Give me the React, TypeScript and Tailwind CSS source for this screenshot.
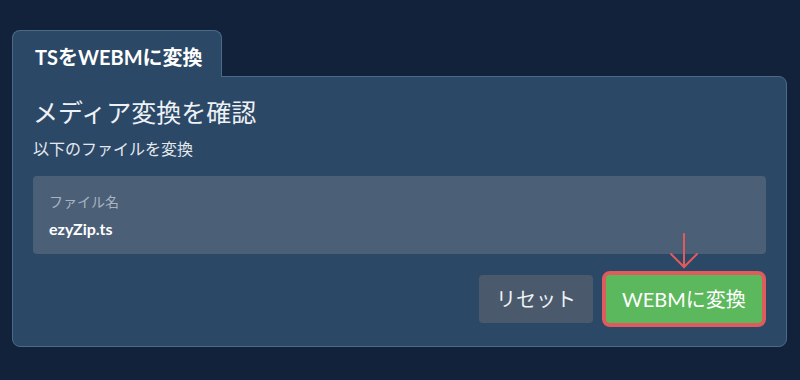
import React from 'react';

const font = { fontFamily: 'Lato, "Noto Sans CJK JP", sans-serif' };

const DownArrow = () => (
  <svg
    className="absolute left-1/2 -translate-x-1/2 -top-[42px]"
    width="30"
    height="36"
    viewBox="0 0 30 36"
    fill="none"
    stroke="#e05c5c"
    strokeWidth="2"
    strokeLinecap="round"
  >
    <line x1="15" y1="1" x2="15" y2="34" />
    <polyline points="2,21 15,34 28,21" strokeLinejoin="miter" />
  </svg>
);

export default function App() {
  return (
    <div className="h-[380px] bg-[#11223a] px-3 pt-[30px]" style={font}>
      <div className="flex flex-col w-[775px]">
        <div className="relative z-10 -mb-px w-[210px] h-[47px] rounded-t-lg border border-b-0 border-[#4d6988] bg-[#2c4867] pl-[22px] pt-[14px]">
          <span className="block whitespace-nowrap text-[20px] leading-6 font-bold text-white">TSをWEBMに変換</span>
        </div>
        <div className="rounded-lg rounded-tl-none border border-[#4d6988] bg-[#2c4867] px-5 pt-[19px] pb-[23px]">
          <h1 className="text-[25px] leading-8 text-[#eef1f5]">メディア変換を確認</h1>
          <p className="mt-[9px] text-[16px] leading-6 text-[#e4e8ee]">以下のファイルを変換</p>

          <div className="mt-[15px] rounded bg-[#4b5f77] pl-4 pt-4 pb-[13px]">
            <div className="text-[14px] leading-5 text-[#a9b4c2]">ファイル名</div>
            <div className="mt-[5px] text-[16px] leading-6 font-bold text-white">ezyZip.ts</div>
          </div>

          <div className="mt-[21px] flex justify-end gap-[13px] pr-1">
            <button className="h-12 w-[114px] rounded bg-[#4a5a6c] text-[20px] text-[#eef1f5]">
              リセット
            </button>
            <div className="relative">
              <DownArrow />
              <button className="h-12 w-[156px] rounded-sm bg-[#5cb85c] text-[20px] text-white ring-4 ring-[#e05c5c]">
                WEBMに変換
              </button>
            </div>
          </div>
        </div>
      </div>
    </div>
  );
}
